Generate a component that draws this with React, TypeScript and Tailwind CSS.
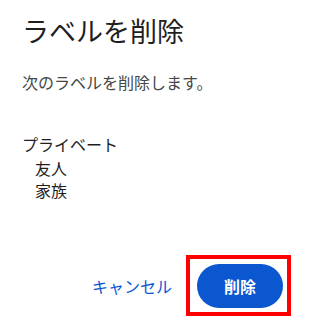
import React from "react";

const FONT = { fontFamily: '"Noto Sans CJK JP", "Noto Sans", sans-serif' };

const labels = [
  { name: "プライベート", children: ["友人", "家族"] },
];

export default function App() {
  return (
    <div className="relative h-[322px] w-[300px] overflow-hidden bg-white" style={FONT}>
      <div className="flex h-full flex-col pl-[22px]">
        <h1 className="mt-[15px] text-[27px] leading-[32px] font-normal text-[#1f1f1f]">
          ラベルを削除
        </h1>
        <p className="mt-[24px] text-[16px] leading-[22px] text-[#444746]">
          次のラベルを削除します。
        </p>

        <ul className="mt-[40px] text-[16px] leading-[22px] text-[#1f1f1f]">
          {labels.map((l) => (
            <li key={l.name}>
              <div className="mb-[2px]">{l.name}</div>
              <ul className="pl-[13px]">
                {l.children.map((c) => (
                  <li key={c}>{c}</li>
                ))}
              </ul>
            </li>
          ))}
        </ul>

        <div className="mt-auto mb-[6px] flex items-center justify-end pr-[9px]">
          <button className="mr-[14px] text-[16px] leading-[22px] text-[#0b57d0]">
            キャンセル
          </button>
          <div className="border-4 border-[#ff0000] pt-[5px] pr-[4px] pb-[4px] pl-[7px]">
            <button className="flex h-[44px] w-[86px] items-center justify-center rounded-full bg-[#0b57d0] text-[16px] font-bold text-white">
              削除
            </button>
          </div>
        </div>
      </div>
    </div>
  );
}
